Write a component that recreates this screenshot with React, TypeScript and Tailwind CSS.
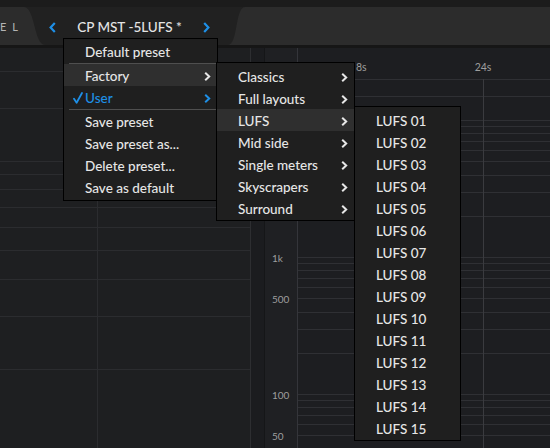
import React from "react";

const mainItems: Array<
  | { kind: "sep" }
  | { kind: "item"; label: string; sub?: boolean; hot?: boolean; checked?: boolean }
> = [
  { kind: "item", label: "Default preset" },
  { kind: "sep" },
  { kind: "item", label: "Factory", sub: true, hot: true },
  { kind: "item", label: "User", sub: true, checked: true },
  { kind: "sep" },
  { kind: "item", label: "Save preset" },
  { kind: "item", label: "Save preset as..." },
  { kind: "item", label: "Delete preset..." },
  { kind: "item", label: "Save as default" },
];

const factoryItems = [
  "Classics",
  "Full layouts",
  "LUFS",
  "Mid side",
  "Single meters",
  "Skyscrapers",
  "Surround",
];

const lufsItems = Array.from({ length: 15 }, (_, i) =>
  `LUFS ${String(i + 1).padStart(2, "0")}`
);

// left panel grid, y relative to content top
const leftLines = [23, 60, 113, 126, 141, 159, 179, 202, 231, 268, 321];

const freqs = [
  20000, 15000, 10000, 9000, 8000, 7000, 6000, 5000, 4000, 3000, 2000, 1000,
  900, 800, 700, 600, 500, 400, 300, 200, 100, 90, 80, 70, 60, 50,
];
const freqY = (f: number) => 209 - 137 * Math.log10(f / 1000);

const freqLabels = [
  { t: "1k", f: 1000 },
  { t: "500", f: 500 },
  { t: "100", f: 100 },
  { t: "50", f: 50 },
];

function Chevron({ className }: { className?: string }) {
  return (
    <svg
      viewBox="0 0 7 9"
      className={className}
      fill="none"
      stroke="currentColor"
      strokeWidth={2}
    >
      <path d="M1.2 0.8 L5.2 4.5 L1.2 8.2" />
    </svg>
  );
}

function Check() {
  return (
    <svg viewBox="0 0 10 12" className="ml-px h-[12px] w-[10px]" fill="none">
      <path
        d="M1 6.8 L3.6 10.8 L9 1"
        stroke="#1e8fe6"
        strokeWidth={1.8}
        strokeLinecap="round"
        strokeLinejoin="round"
      />
    </svg>
  );
}

export default function App() {
  return (
    <div className="relative flex h-[448px] w-[550px] flex-col overflow-hidden bg-[#1e1f21] font-['Lato','Noto_Sans',sans-serif]">
      <div className="h-[7px] bg-[#1c1c1c]" />

      <header className="flex h-[38px] bg-[#2c2c2c]">
        <div className="flex w-[24px] items-center pt-[2px]">
          <span className="whitespace-nowrap text-[11px] tracking-[6px] text-[#b4b4b4]">
            EL
          </span>
        </div>
        <div className="flex w-[221px] items-center bg-[#212121] pl-[25px] pt-[2px] [clip-path:path('M0_0C11_0_10_38_21_38L204_38C214_38_211_0_221_0Z')]">
          <svg
            viewBox="0 0 7 11"
            className="h-[11px] w-[7px] text-[#1e8fe6]"
            fill="none"
            stroke="currentColor"
            strokeWidth={2.2}
          >
            <path d="M5.8 1 L1.6 5.5 L5.8 10" />
          </svg>
          <span className="w-[147px] text-center text-[13.5px] font-medium text-[#e4e4e4]">
            CP MST -5LUFS *
          </span>
          <svg
            viewBox="0 0 7 11"
            className="h-[11px] w-[7px] text-[#1e8fe6]"
            fill="none"
            stroke="currentColor"
            strokeWidth={2.2}
          >
            <path d="M1.2 1 L5.4 5.5 L1.2 10" />
          </svg>
        </div>
      </header>

      <div className="h-[3px] bg-[#161616]" />

      <main className="flex flex-1">
        <div className="w-[251px] border-r border-[#2d2e31]">
          <svg width="250" height="400" className="block">
            {leftLines.map((y) => (
              <line key={y} x1="0" x2="250" y1={y + 0.5} y2={y + 0.5} stroke="#2b2c2f" />
            ))}
            <line x1="97.5" x2="97.5" y1="0" y2="400" stroke="#2b2c2f" />
          </svg>
        </div>
        <div className="w-[14px] border-r border-[#151618] bg-[#1b1c1f]" />
        <div className="flex flex-1">
          <div className="w-[33px] border-r border-[#34353a] bg-[#1f2023]">
            <svg width="32" height="400" className="block">
              {freqLabels.map((l) => (
                <text
                  key={l.t}
                  x="7"
                  y={freqY(l.f) + 4.6}
                  fontSize="10"
                  fill="#9e9e9e"
                  fontFamily="Lato, sans-serif"
                >
                  {l.t}
                </text>
              ))}
            </svg>
          </div>
          <div className="flex-1 bg-[#1d1e21]">
            <svg width="252" height="400" className="block">
              {freqs.map((f) => (
                <line
                  key={f}
                  x1="0"
                  x2="252"
                  y1={Math.round(freqY(f)) + 0.5}
                  y2={Math.round(freqY(f)) + 0.5}
                  stroke="#2f3034"
                />
              ))}
              <line x1="185.5" x2="185.5" y1="31" y2="400" stroke="#3a3b3f" />
              <text x="58" y="23" fontSize="10.5" fill="#9e9e9e" fontFamily="Lato, sans-serif">
                8s
              </text>
              <text
                x="185"
                y="23"
                fontSize="10.5"
                fill="#9e9e9e"
                textAnchor="middle"
                fontFamily="Lato, sans-serif"
              >
                24s
              </text>
            </svg>
          </div>
        </div>
      </main>

      {/* preset menu */}
      <div className="absolute left-[63px] top-[38px] w-[155px] border border-black bg-[#1f1f1f] pb-[2px] pt-px text-[13.5px] font-medium text-[#e6e6e6]">
        {mainItems.map((it, i) =>
          it.kind === "sep" ? (
            <div key={i} className="ml-[5px] mt-px h-px bg-[#4f4f4f]" />
          ) : (
            <div
              key={i}
              className={`flex h-[22px] items-center pl-[8px] pr-[6px] pt-[2px] ${
                it.hot ? "bg-[#2f2f2f]" : ""
              } ${it.checked ? "text-[#1e8fe6]" : ""}`}
            >
              <span className="flex w-[13px] items-center">
                {it.checked && <Check />}
              </span>
              <span>{it.label}</span>
              {it.sub && <Chevron className="ml-auto h-[9px] w-[7px]" />}
            </div>
          )
        )}
      </div>

      {/* factory submenu */}
      <div className="absolute left-[216px] top-[62px] w-[139px] border border-black bg-[#1f1f1f] pb-px pt-[2px] text-[13.5px] font-medium text-[#e6e6e6]">
        {factoryItems.map((label) => (
          <div
            key={label}
            className={`flex h-[22px] items-center pl-[21px] pr-[6px] pt-[2px] ${
              label === "LUFS" ? "bg-[#2f2f2f]" : ""
            }`}
          >
            <span>{label}</span>
            <Chevron className="ml-auto h-[9px] w-[7px]" />
          </div>
        ))}
      </div>

      {/* LUFS submenu */}
      <div className="absolute left-[354px] top-[106px] w-[107px] border border-black bg-[#1f1f1f] pb-px pt-[2px] text-[13.5px] font-medium text-[#e6e6e6]">
        {lufsItems.map((label) => (
          <div key={label} className="flex h-[22px] items-center pl-[21px] pt-[2px]">
            {label}
          </div>
        ))}
      </div>
    </div>
  );
}
